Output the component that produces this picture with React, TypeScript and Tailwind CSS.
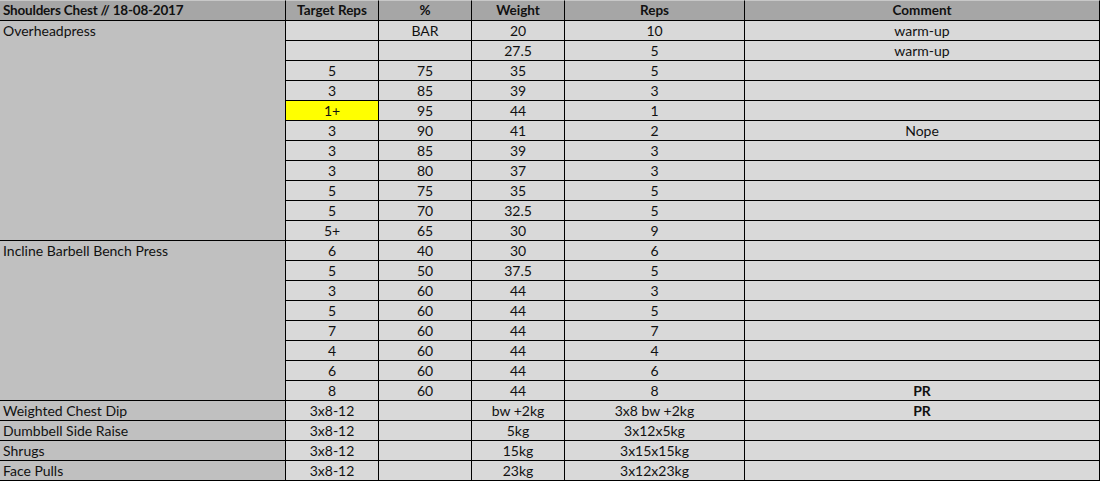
import React from "react";

type Row = [string, string, string, string, string, boolean?, boolean?];

const groups: { name: string; rows: Row[] }[] = [
  {
    name: "Overheadpress",
    rows: [
      ["", "BAR", "20", "10", "warm-up"],
      ["", "", "27.5", "5", "warm-up"],
      ["5", "75", "35", "5", ""],
      ["3", "85", "39", "3", ""],
      ["1+", "95", "44", "1", "", true],
      ["3", "90", "41", "2", "Nope"],
      ["3", "85", "39", "3", ""],
      ["3", "80", "37", "3", ""],
      ["5", "75", "35", "5", ""],
      ["5", "70", "32.5", "5", ""],
      ["5+", "65", "30", "9", ""],
    ],
  },
  {
    name: "Incline Barbell Bench Press",
    rows: [
      ["6", "40", "30", "6", ""],
      ["5", "50", "37.5", "5", ""],
      ["3", "60", "44", "3", ""],
      ["5", "60", "44", "5", ""],
      ["7", "60", "44", "7", ""],
      ["4", "60", "44", "4", ""],
      ["6", "60", "44", "6", ""],
      ["8", "60", "44", "8", "PR", false, true],
    ],
  },
  { name: "Weighted Chest Dip", rows: [["3x8-12", "", "bw +2kg", "3x8 bw +2kg", "PR", false, true]] },
  { name: "Dumbbell Side Raise", rows: [["3x8-12", "", "5kg", "3x12x5kg", ""]] },
  { name: "Shrugs", rows: [["3x8-12", "", "15kg", "3x15x15kg", ""]] },
  { name: "Face Pulls", rows: [["3x8-12", "", "23kg", "3x12x23kg", ""]] },
];

const cell = "border-r border-b border-black h-[20px] leading-[19px] text-center whitespace-nowrap overflow-hidden";

export default function App() {
  return (
    <div
      className="w-[1100px] h-[481px] bg-white text-[#111] text-[14px] overflow-hidden"
      style={{ fontFamily: "Lato, 'Open Sans', sans-serif" }}
    >
      <div className="grid grid-cols-[286px_93px_93px_93px_180px_355px] grid-rows-[21px]">
        <div className="border-t border-t-[#c8c8c8] border-r border-b border-black bg-[#a6a6a6] h-[21px] leading-[19px] font-bold text-[13.5px] tracking-[-0.2px] pl-[3px] whitespace-nowrap">
          Shoulders Chest // 18-08-2017
        </div>
        {["Target Reps", "%", "Weight", "Reps", "Comment"].map((h) => (
          <div
            key={h}
            className="border-t border-t-[#c8c8c8] border-r border-b border-black bg-[#a6a6a6] h-[21px] leading-[19px] font-bold text-[13.5px] text-center whitespace-nowrap"
          >
            {h}
          </div>
        ))}
        {groups.map((g) => (
          <React.Fragment key={g.name}>
            <div
              className="border-r border-b border-black bg-[#c0c0c0] pl-[3px] leading-[19px] whitespace-nowrap"
              style={{ gridRow: `span ${g.rows.length} / span ${g.rows.length}` }}
            >
              {g.name}
            </div>
            {g.rows.map((r, i) => (
              <React.Fragment key={i}>
                <div className={`${cell} ${r[5] ? "bg-[#ffff00]" : "bg-[#d9d9d9]"}`}>{r[0]}</div>
                <div className={`${cell} bg-[#d9d9d9]`}>{r[1]}</div>
                <div className={`${cell} bg-[#d9d9d9]`}>{r[2]}</div>
                <div className={`${cell} bg-[#d9d9d9]`}>{r[3]}</div>
                <div className={`${cell} bg-[#d9d9d9] ${r[6] ? "font-bold" : ""}`}>{r[4]}</div>
              </React.Fragment>
            ))}
          </React.Fragment>
        ))}
      </div>
    </div>
  );
}
